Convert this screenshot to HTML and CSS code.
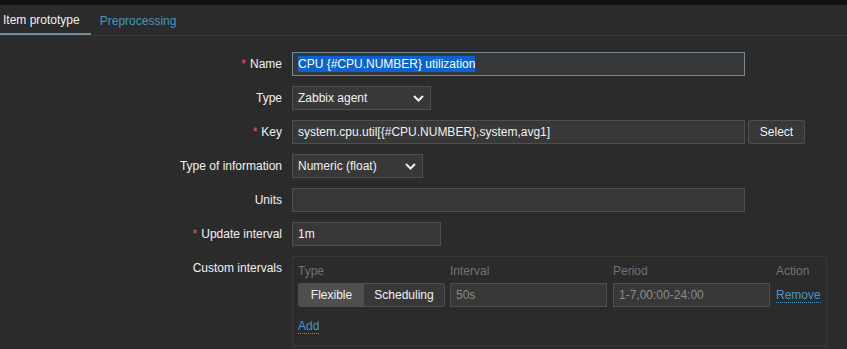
FILE: index.html
```html
<!DOCTYPE html>
<html>
<head>
    <meta charset="UTF-8">
    <title>Item prototype</title>
    <link rel="stylesheet" href="styles.css">
</head>
<body>
    <div class="topstrip"></div>
    <div class="tabs">
        <span class="tab active">Item prototype</span>
        <span class="tab">Preprocessing</span>
    </div>

    <div class="form">
        <label class="req">Name</label>
        <div class="field">
            <div class="input focus wide"><span class="sel">CPU {#CPU.NUMBER} utilization</span></div>
        </div>

        <label>Type</label>
        <div class="field">
            <div class="select w-type">Zabbix agent
                <svg class="chev" width="11" height="7" viewBox="0 0 11 7"><polyline points="1,1 5.5,5.5 10,1" fill="none" stroke="#f2f2f2" stroke-width="2"/></svg>
            </div>
        </div>

        <label class="req">Key</label>
        <div class="field">
            <div class="input wide">system.cpu.util[{#CPU.NUMBER},system,avg1]</div>
            <button class="btn">Select</button>
        </div>

        <label>Type of information</label>
        <div class="field">
            <div class="select w-info">Numeric (float)
                <svg class="chev" width="11" height="7" viewBox="0 0 11 7"><polyline points="1,1 5.5,5.5 10,1" fill="none" stroke="#f2f2f2" stroke-width="2"/></svg>
            </div>
        </div>

        <label>Units</label>
        <div class="field">
            <div class="input wide"></div>
        </div>

        <label class="req">Update interval</label>
        <div class="field">
            <div class="input w-interval">1m</div>
        </div>

        <label>Custom intervals</label>
        <div class="field">
            <div class="intervals">
                <div class="irow head">
                    <span class="c-type">Type</span>
                    <span class="c-int">Interval</span>
                    <span class="c-per">Period</span>
                    <span>Action</span>
                </div>
                <div class="irow">
                    <div class="seg c-type">
                        <span class="on">Flexible</span>
                        <span>Scheduling</span>
                    </div>
                    <div class="input dim c-int">50s</div>
                    <div class="input dim c-per">1-7,00:00-24:00</div>
                    <a class="link">Remove</a>
                </div>
                <a class="link add">Add</a>
            </div>
        </div>
    </div>
</body>
</html>
```

FILE: styles.css
```css
body {
    margin: 0;
    background-color: #2b2b2b;
    color: #f2f2f2;
    font-family: Arial, "Liberation Sans", sans-serif;
    font-size: 12px;
    overflow: hidden;
}
.topstrip {
    height: 5px;
    background-color: #0f1012;
}
.tabs {
    display: flex;
    height: 30px;
    border-bottom: 1px solid #383838;
}
.tab {
    display: flex;
    align-items: center;
    padding: 1px 10px 0 9px;
    color: #4796c4;
    box-sizing: border-box;
    height: 30px;
}
.tab.active {
    color: #f2f2f2;
    padding: 1px 11px 0 3px;
    border-bottom: 2px solid #768d99;
}

.form {
    display: grid;
    grid-template-columns: 282px 1fr;
    column-gap: 10px;
    row-gap: 10px;
    margin-top: 16px;
}
.form label {
    text-align: right;
    height: 24px;
    line-height: 24px;
}
.form label.req::before {
    content: "*";
    color: #e45959;
    margin-right: 4px;
}
.field {
    display: flex;
    gap: 3px;
    align-items: flex-start;
}

.input, .select {
    box-sizing: border-box;
    height: 24px;
    line-height: 22px;
    background-color: #383838;
    border: 1px solid #4f4f4f;
    padding: 0 5px;
    color: #f2f2f2;
    white-space: nowrap;
}
.input.focus {
    border-color: #768d99;
}
.sel {
    background-color: #0b63d1;
    color: #ffffff;
    padding: 1px 0;
}
.wide { width: 453px; }
.w-interval { width: 149px; }
.select {
    position: relative;
}
.w-type { width: 139px; }
.w-info { width: 131px; }
.chev {
    position: absolute;
    right: 6px;
    top: 8px;
}
.btn {
    box-sizing: border-box;
    height: 24px;
    width: 57px;
    background-color: #383838;
    border: 1px solid #4f4f4f;
    border-radius: 2px;
    color: #f2f2f2;
    font-family: Arial, "Liberation Sans", sans-serif;
    font-size: 12px;
    padding: 0;
}

.intervals {
    box-sizing: border-box;
    width: 535px;
    height: 90px;
    border: 1px solid #383838;
    padding: 2px 5px 0 5px;
}
.irow {
    display: flex;
    align-items: center;
    gap: 6px;
}
.irow.head {
    height: 24px;
    color: #737373;
}
.irow .input.dim {
    color: #8c8c8c;
}
.c-type { width: 147px; box-sizing: border-box; margin-right: -1px; }
.c-int { width: 157px; box-sizing: border-box; }
.c-per { width: 157px; box-sizing: border-box; }
.seg {
    display: flex;
    height: 24px;
    border: 1px solid #4f4f4f;
    border-radius: 2px;
    overflow: hidden;
}
.seg span {
    display: flex;
    align-items: center;
    justify-content: center;
    background-color: #383838;
    color: #f2f2f2;
}
.seg span:first-child {
    width: 65px;
}
.seg span:last-child {
    flex: 1;
}
.seg span.on {
    background-color: #4f4f4f;
}
.link {
    color: #4796c4;
    border-bottom: 1px dotted #4796c4;
    line-height: 14px;
}
.add {
    display: inline-block;
    margin-top: 12px;
}
```
